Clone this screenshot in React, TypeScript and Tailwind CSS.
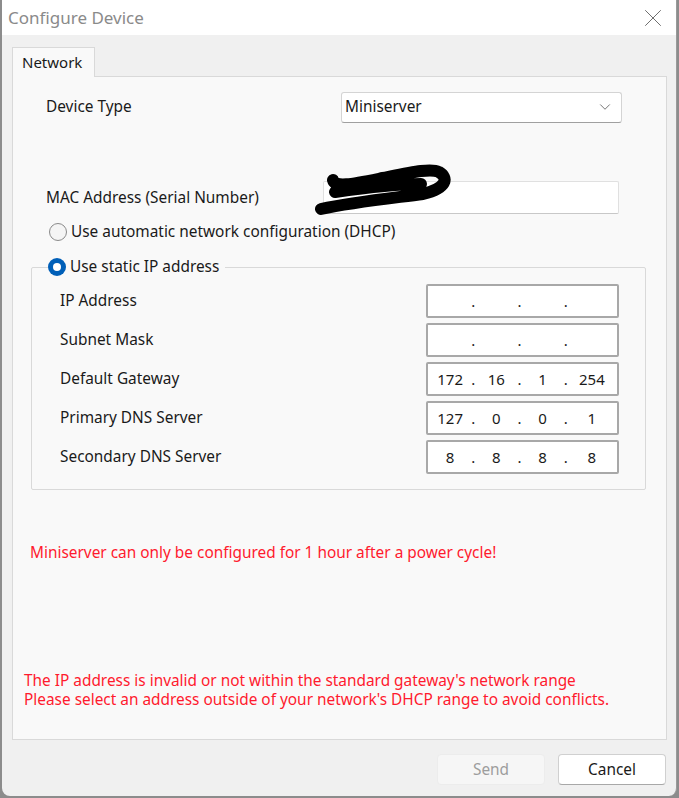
import { ChevronDown, X } from "lucide-react";

const font = { fontFamily: '"Noto Sans", "Open Sans", sans-serif' };

function IpField({ parts }: { parts: string[] }) {
  return (
    <div className="flex h-[34px] w-[193px] items-center rounded-[2px] border-2 border-[#a8a8a8] bg-white px-[2px] text-[15px] text-[#1a1a1a]">
      {parts.map((p, i) => (
        <div key={i} className="flex flex-1 items-center">
          <span className="flex-1 text-center">{p}</span>
          {i < 3 && <span className="w-[6px] text-center">.</span>}
        </div>
      ))}
    </div>
  );
}

function Radio({ checked }: { checked?: boolean }) {
  return checked ? (
    <span className="flex h-[18px] w-[18px] items-center justify-center rounded-full bg-[#005fb8]">
      <span className="h-[8px] w-[8px] rounded-full bg-white" />
    </span>
  ) : (
    <span className="h-[18px] w-[18px] rounded-full border border-[#8a8a8a] bg-[#f5f5f5]" />
  );
}

const rows: [string, string[]][] = [
  ["IP Address", ["", "", "", ""]],
  ["Subnet Mask", ["", "", "", ""]],
  ["Default Gateway", ["172", "16", "1", "254"]],
  ["Primary DNS Server", ["127", "0", "0", "1"]],
  ["Secondary DNS Server", ["8", "8", "8", "8"]],
];

export default function App() {
  return (
    <div className="h-[798px] w-[679px] overflow-hidden bg-[#8c8c8c]" style={font}>
      <div className="ml-[2px] flex h-[796px] w-[675px] flex-col overflow-hidden rounded-b-[8px] border-r border-[#9a9a9a] bg-[#f0f0f0]">
        {/* title bar */}
        <div className="flex h-[35px] shrink-0 items-center justify-between bg-white pl-[6px] pr-[8px]">
          <span className="text-[17px] text-[#8a8a8a]">Configure Device</span>
          <X className="h-[30px] w-[30px] text-[#6f6f6f]" strokeWidth={0.8} />
        </div>

        <div className="flex flex-1 flex-col px-[10px] pt-[12px]">
          {/* tab */}
          <div className="flex">
            <div className="relative z-10 -mb-px flex h-[30px] w-[83px] items-center border border-b-0 border-[#d9d9d9] bg-[#f9f9f9] pl-[9px] text-[15px] text-[#1a1a1a]">
              Network
            </div>
          </div>

          {/* panel */}
          <div className="relative h-[664px] w-[655px] border border-[#d9d9d9] bg-[#f9f9f9] text-[15.4px] text-[#1a1a1a]">
            <div className="mt-[15px] flex h-[30px] items-center justify-between pl-[33px] pr-[44px]">
              <span>Device Type</span>
              <div className="flex h-[31px] w-[281px] items-center justify-between rounded-[3px] border border-[#d4d4d4] border-b-[#a0a0a0] bg-white pl-[3px] pr-[7px]">
                <span>Miniserver</span>
                <ChevronDown className="h-[18px] w-[18px] text-[#666]" strokeWidth={1.2} />
              </div>
            </div>

            <div className="mt-[59px] flex h-[33px] items-center justify-between pl-[33px] pr-[47px]">
              <span>MAC Address (Serial Number)</span>
              <div className="h-[33px] w-[296px] rounded-[2px] border border-[#e0e0e0] border-b-[#c8c8c8] bg-white" />
            </div>

            <div className="mt-[8px] flex h-[20px] items-center gap-[4px] pl-[36px]">
              <Radio />
              <span>Use automatic network configuration (DHCP)</span>
            </div>

            {/* group box */}
            <div className="relative ml-[18px] mt-[25px] h-[223px] w-[615px] rounded-[2px] border border-[#d9d9d9]">
              <div className="absolute -top-[11px] left-[16px] flex h-[20px] items-center gap-[4px] bg-[#f9f9f9] pr-[6px]">
                <Radio checked />
                <span>Use static IP address</span>
              </div>
              <div className="flex flex-col gap-[5px] pl-[28px] pr-[26px] pt-[16px]">
                {rows.map(([label, parts]) => (
                  <div key={label} className="flex items-center justify-between">
                    <span>{label}</span>
                    <IpField parts={parts} />
                  </div>
                ))}
              </div>
            </div>

            <div className="mt-[51px] pl-[17px] text-[#ff1a2e]">
              Miniserver can only be configured for 1 hour after a power cycle!
            </div>

            <div className="mt-[107px] pl-[11px] leading-[19px] text-[#ff1a2e]">
              <div>The IP address is invalid or not within the standard gateway's network range</div>
              <div>Please select an address outside of your network's DHCP range to avoid conflicts.</div>
            </div>

            {/* scribble redaction */}
            <svg className="absolute left-[300px] top-[87px]" width="150" height="56" viewBox="0 0 150 56">
              <path
                d="M20 16 C 22 24, 40 20, 70 14 C 100 8, 118 4, 126 8 C 136 14, 134 24, 110 30 C 80 34, 40 38, 8 45 M 22 28 C 50 24, 80 20, 108 20"
                fill="none"
                stroke="#000"
                strokeWidth="12"
                strokeLinecap="round"
                strokeLinejoin="round"
              />
            </svg>
          </div>

          {/* buttons */}
          <div className="mt-[14px] flex justify-end gap-[13px]">
            <div className="flex h-[31px] w-[108px] items-center justify-center rounded-[4px] border border-[#ececec] bg-[#f6f6f6] text-[15.4px] text-[#9d9d9d]">
              Send
            </div>
            <div className="flex h-[31px] w-[108px] items-center justify-center rounded-[4px] border border-[#d0d0d0] border-b-[#a8a8a8] bg-white text-[15.4px] text-[#1a1a1a]">
              Cancel
            </div>
          </div>
        </div>
      </div>
    </div>
  );
}
